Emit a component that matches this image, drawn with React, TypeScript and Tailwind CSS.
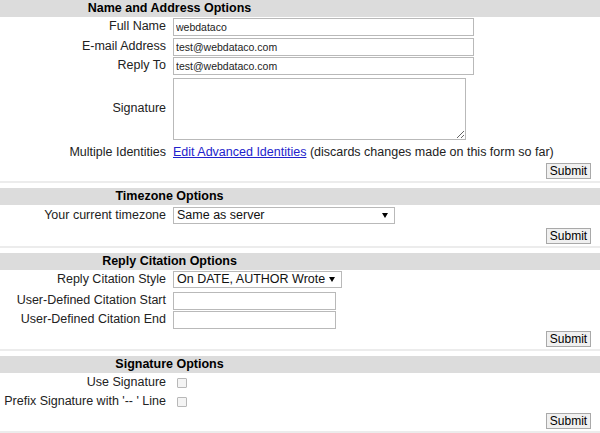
import React from 'react';

const Header: React.FC<{ title: string }> = ({ title }) => (
    <div className="h-[17px] bg-[#dcdcdc] flex">
        <div className="w-[339px] text-center font-bold text-[12.5px] leading-[17px] text-black">{title}</div>
    </div>
);

const Row: React.FC<{ label: string; h?: string; children: React.ReactNode }> = ({ label, h = 'h-[19px]', children }) => (
    <div className={`flex items-start ${h}`}>
        <div className="w-[166px] text-right pr-0 text-[12.5px] leading-[17px] text-[#222] whitespace-nowrap">{label}</div>
        <div className="pl-[7px] flex items-start">{children}</div>
    </div>
);

const TextBox: React.FC<{ w: string; value?: string }> = ({ w, value = '' }) => (
    <input
        type="text"
        defaultValue={value}
        className={`${w} h-[18px] border border-[#b9b9b9] bg-white px-[2px] text-[10.5px] text-[#222] outline-none`}
    />
);

// drop-down drawn as a box so the text sits where the old browser put it
const Select: React.FC<{ w: string; value: string }> = ({ w, value }) => (
    <div role="combobox" className={`${w} h-[17px] border border-[#b9b9b9] bg-white flex items-center justify-between pl-[3px] pr-[6px]`}>
        <span className="text-[12.5px] leading-[15px] text-[#111] whitespace-nowrap">{value}</span>
        <span className="w-0 h-0 border-l-[3px] border-r-[3px] border-t-[5px] border-l-transparent border-r-transparent border-t-black" />
    </div>
);

const Submit: React.FC<{ mt: string }> = ({ mt }) => (
    <div className={`flex justify-end pr-[9px] ${mt}`}>
        <button className="w-[45px] h-[16px] bg-[#f0f0f0] border border-[#a9a9a9] text-[12px] leading-[14px] text-black rounded-none">
            Submit
        </button>
    </div>
);

const Separator: React.FC = () => <div className="mt-[2px] h-[2px] bg-[#ececec] mb-[5px]" />;

const Check: React.FC = () => (
    <input
        type="checkbox"
        className="appearance-none ml-[4px] mt-[4px] w-[10px] h-[10px] border border-[#b8b8b8] bg-[#f4f4f4] rounded-[1px]"
    />
);

export default function App() {
    return (
        <div className="w-[600px] h-[433px] bg-white overflow-hidden" style={{ fontFamily: '"Liberation Sans", Arial, sans-serif' }}>
            {/* Name and Address */}
            <Header title="Name and Address Options" />
            <div className="pt-[1px]">
                <Row label="Full Name" h="h-[20px]"><TextBox w="w-[301px]" value="webdataco" /></Row>
                <Row label="E-mail Address" h="h-[19px]"><TextBox w="w-[301px]" value="test@webdataco.com" /></Row>
                <Row label="Reply To" h="h-[21px]"><TextBox w="w-[301px]" value="test@webdataco.com" /></Row>
                <div className="flex h-[64px]">
                    <div className="w-[166px] text-right text-[12.5px] leading-[17px] text-[#222] pt-[22px]">Signature</div>
                    <div className="pl-[7px]">
                        <textarea className="block w-[293px] h-[62px] border border-[#b9b9b9] bg-white outline-none" />
                    </div>
                </div>
                <div className="flex h-[20px] items-center">
                    <div className="w-[166px] text-right text-[12.5px] text-[#222] whitespace-nowrap">Multiple Identities</div>
                    <div className="pl-[7px] text-[12.5px] text-[#222] whitespace-nowrap">
                        <a href="#" className="text-[#2222cc] underline">Edit Advanced Identities</a> (discards changes made on this form so far)
                    </div>
                </div>
            </div>
            <Submit mt="mt-[1px]" />
            <Separator />

            {/* Timezone */}
            <Header title="Timezone Options" />
            <div className="pt-[2px]">
                <Row label="Your current timezone" h="h-[17px]"><Select w="w-[222px]" value="Same as server" /></Row>
            </div>
            <Submit mt="mt-[4px]" />
            <Separator />

            {/* Reply Citation */}
            <Header title="Reply Citation Options" />
            <div className="pt-[1px]">
                <Row label="Reply Citation Style" h="h-[21px]"><Select w="w-[169px]" value="On DATE, AUTHOR Wrote" /></Row>
                <Row label="User-Defined Citation Start" h="h-[19px]"><TextBox w="w-[163px]" /></Row>
                <Row label="User-Defined Citation End" h="h-[19px]"><TextBox w="w-[163px]" /></Row>
            </div>
            <Submit mt="mt-[1px]" />
            <Separator />

            {/* Signature */}
            <Header title="Signature Options" />
            <div className="pt-[1px]">
                <Row label="Use Signature" h="h-[19px]"><Check /></Row>
                <Row label="Prefix Signature with '-- ' Line" h="h-[19px]"><Check /></Row>
            </div>
            <Submit mt="mt-[1px]" />
            <Separator />
        </div>
    );
}
